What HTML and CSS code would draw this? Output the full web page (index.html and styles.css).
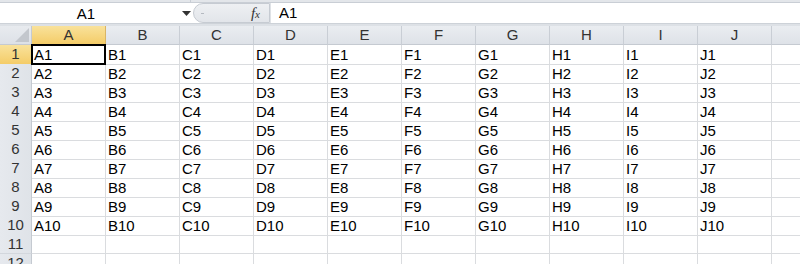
FILE: index.html
```html
<!DOCTYPE html>
<html>
<head>
<meta charset="utf-8">
<link rel="stylesheet" href="styles.css">
</head>
<body>
<div class="app">
  <div class="ribbon-edge"><div class="ribbon-split"></div></div>
  <div class="formula-bar">
    <div class="name-box">
      <span class="name-text">A1</span>
      <svg class="drop" width="9" height="5" viewBox="0 0 9 5"><path d="M0 0 H9 L4.5 5 Z" fill="#333"/></svg>
    </div>
    <div class="fx-pill">
      <span class="pill-dot"></span>
      <span class="fx">f<span class="fx-x">x</span></span>
    </div>
    <div class="formula-input">A1</div>
  </div>
  <div class="bar-gap"></div>
  <div class="sheet">
    <div class="row head-row">
      <div class="corner"><svg width="14" height="14" viewBox="0 0 14 14"><path d="M14 0 V14 H0 Z" fill="#c3c7cd"/></svg></div>
      <div class="ch sel-h">A</div><div class="ch">B</div><div class="ch">C</div><div class="ch">D</div><div class="ch">E</div><div class="ch">F</div><div class="ch">G</div><div class="ch">H</div><div class="ch">I</div><div class="ch">J</div><div class="ch rest"></div>
    </div>
    <div class="row"><div class="rh sel-h">1</div><div class="c active">A1</div><div class="c">B1</div><div class="c">C1</div><div class="c">D1</div><div class="c">E1</div><div class="c">F1</div><div class="c">G1</div><div class="c">H1</div><div class="c">I1</div><div class="c">J1</div><div class="c rest"></div></div>
    <div class="row"><div class="rh">2</div><div class="c">A2</div><div class="c">B2</div><div class="c">C2</div><div class="c">D2</div><div class="c">E2</div><div class="c">F2</div><div class="c">G2</div><div class="c">H2</div><div class="c">I2</div><div class="c">J2</div><div class="c rest"></div></div>
    <div class="row"><div class="rh">3</div><div class="c">A3</div><div class="c">B3</div><div class="c">C3</div><div class="c">D3</div><div class="c">E3</div><div class="c">F3</div><div class="c">G3</div><div class="c">H3</div><div class="c">I3</div><div class="c">J3</div><div class="c rest"></div></div>
    <div class="row"><div class="rh">4</div><div class="c">A4</div><div class="c">B4</div><div class="c">C4</div><div class="c">D4</div><div class="c">E4</div><div class="c">F4</div><div class="c">G4</div><div class="c">H4</div><div class="c">I4</div><div class="c">J4</div><div class="c rest"></div></div>
    <div class="row"><div class="rh">5</div><div class="c">A5</div><div class="c">B5</div><div class="c">C5</div><div class="c">D5</div><div class="c">E5</div><div class="c">F5</div><div class="c">G5</div><div class="c">H5</div><div class="c">I5</div><div class="c">J5</div><div class="c rest"></div></div>
    <div class="row"><div class="rh">6</div><div class="c">A6</div><div class="c">B6</div><div class="c">C6</div><div class="c">D6</div><div class="c">E6</div><div class="c">F6</div><div class="c">G6</div><div class="c">H6</div><div class="c">I6</div><div class="c">J6</div><div class="c rest"></div></div>
    <div class="row"><div class="rh">7</div><div class="c">A7</div><div class="c">B7</div><div class="c">C7</div><div class="c">D7</div><div class="c">E7</div><div class="c">F7</div><div class="c">G7</div><div class="c">H7</div><div class="c">I7</div><div class="c">J7</div><div class="c rest"></div></div>
    <div class="row"><div class="rh">8</div><div class="c">A8</div><div class="c">B8</div><div class="c">C8</div><div class="c">D8</div><div class="c">E8</div><div class="c">F8</div><div class="c">G8</div><div class="c">H8</div><div class="c">I8</div><div class="c">J8</div><div class="c rest"></div></div>
    <div class="row"><div class="rh">9</div><div class="c">A9</div><div class="c">B9</div><div class="c">C9</div><div class="c">D9</div><div class="c">E9</div><div class="c">F9</div><div class="c">G9</div><div class="c">H9</div><div class="c">I9</div><div class="c">J9</div><div class="c rest"></div></div>
    <div class="row"><div class="rh">10</div><div class="c">A10</div><div class="c">B10</div><div class="c">C10</div><div class="c">D10</div><div class="c">E10</div><div class="c">F10</div><div class="c">G10</div><div class="c">H10</div><div class="c">I10</div><div class="c">J10</div><div class="c rest"></div></div>
    <div class="row"><div class="rh">11</div><div class="c"></div><div class="c"></div><div class="c"></div><div class="c"></div><div class="c"></div><div class="c"></div><div class="c"></div><div class="c"></div><div class="c"></div><div class="c"></div><div class="c rest"></div></div>
    <div class="row"><div class="rh">12</div><div class="c"></div><div class="c"></div><div class="c"></div><div class="c"></div><div class="c"></div><div class="c"></div><div class="c"></div><div class="c"></div><div class="c"></div><div class="c"></div><div class="c rest"></div></div>
  </div>
</div>
</body>
</html>
```
FILE: styles.css
```css
html, body {
  margin: 0;
  padding: 0;
  background: #ffffff;
  overflow: hidden;
}
.app {
  width: 800px;
  height: 264px;
  overflow: hidden;
  font-family: "Liberation Sans", Arial, sans-serif;
  font-size: 15px;
  color: #000;
}
.ribbon-edge {
  height: 3px;
  background: #e3e6ea;
  border-bottom: 1px solid #c9ced5;
  box-sizing: border-box;
  position: relative;
}
.ribbon-split {
  position: absolute;
  left: 190px;
  top: 0;
  width: 1px;
  height: 3px;
  background: #c9ced5;
}
.formula-bar {
  display: flex;
  height: 20px;
  background: #ffffff;
}
.name-box {
  width: 193px;
  display: flex;
  align-items: center;
  position: relative;
  box-sizing: border-box;
}
.name-text {
  width: 172px;
  text-align: center;
  font-size: 15px;
}
.drop {
  margin-left: 10px;
}
.fx-pill {
  width: 77px;
  height: 20px;
  box-sizing: border-box;
  background: linear-gradient(#eef0f3, #e2e5ea);
  border: 1px solid #c6cbd2;
  border-radius: 10px 0 0 10px;
  display: flex;
  align-items: center;
  justify-content: space-between;
  padding: 0 9px 0 7px;
}
.pill-dot {
  width: 3px;
  height: 1px;
  background: #b4b9c0;
}
.fx {
  font-family: "Liberation Serif", "Times New Roman", serif;
  font-style: italic;
  font-size: 15px;
  color: #333;
}
.fx-x {
  font-size: 11px;
}
.formula-input {
  flex: 1;
  padding-left: 8px;
  line-height: 20px;
  font-size: 15px;
  border-left: 1px solid #dfe2e6;
}
.bar-gap {
  height: 2px;
  background: #dde1e6;
  border-top: 1px solid #cdd2d8;
}
.sheet {
  display: flex;
  flex-direction: column;
}
.row {
  display: grid;
  grid-template-columns: 32px repeat(10, 74px) 1fr;
  height: 19px;
}
.corner {
  background: linear-gradient(#e8ebef, #dde1e7);
  border-right: 1px solid #c5cad1;
  border-bottom: 1px solid #c5cad1;
  box-sizing: border-box;
  display: flex;
  align-items: flex-end;
  justify-content: flex-end;
  padding: 0 2px 2px 0;
}
.corner svg { display: block; }
.ch {
  background: linear-gradient(#eaedf1, #dee2e8);
  border-right: 1px solid #c9ced5;
  border-bottom: 1px solid #c5cad1;
  box-sizing: border-box;
  text-align: center;
  line-height: 18px;
  color: #333;
}
.rh {
  background: linear-gradient(90deg, #e6e9ee, #dfe3e8);
  border-right: 1px solid #c5cad1;
  border-bottom: 1px solid #d3d7dd;
  box-sizing: border-box;
  text-align: center;
  line-height: 18px;
  color: #333;
}
.sel-h {
  background: linear-gradient(#f9e29b, #f4cc68);
  border-right-color: #d9b565;
  border-bottom-color: #d9b565;
}
.c {
  border-right: 1px solid #dadcdf;
  border-bottom: 1px solid #dadcdf;
  box-sizing: border-box;
  padding-left: 2px;
  line-height: 19px;
  white-space: nowrap;
  overflow: visible;
}
.rest {
  border-right: none;
}
.active {
  position: relative;
}
.active::after {
  content: "";
  position: absolute;
  left: -1px;
  top: -1px;
  right: -1px;
  bottom: -1px;
  border: 2px solid #000;
  pointer-events: none;
}
```
